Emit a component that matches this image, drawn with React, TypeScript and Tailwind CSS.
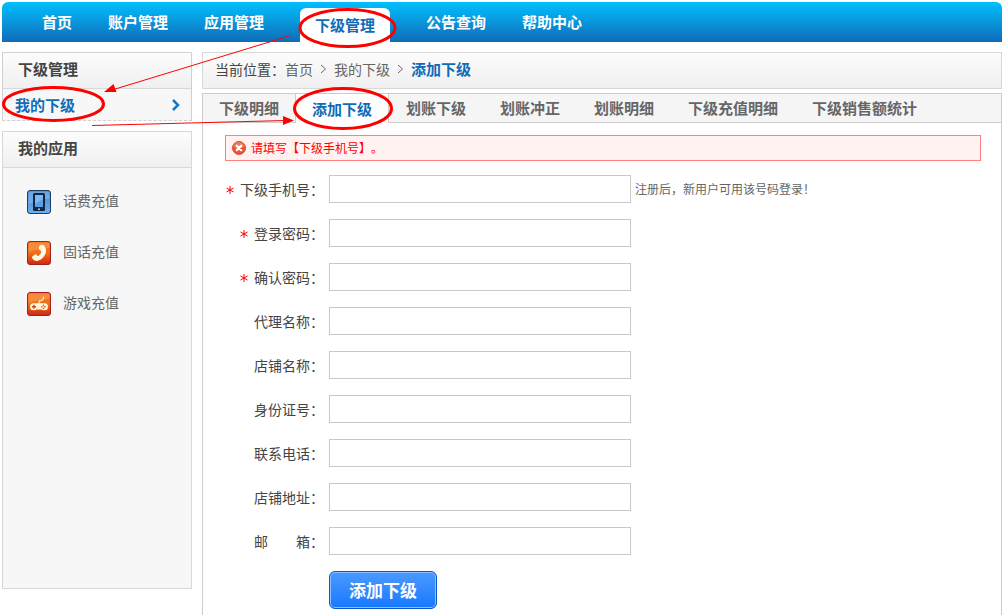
import type { ReactNode } from 'react';

const navItems = ['首页', '账户管理', '应用管理', '下级管理', '公告查询', '帮助中心'];
const tabs = ['下级明细', '添加下级', '划账下级', '划账冲正', '划账明细', '下级充值明细', '下级销售额统计'];

type Field = { id: string; label: string; type?: string; required?: boolean; note?: string };

const fields: Field[] = [
  { id: 'mobile', label: '下级手机号：', type: 'tel', required: true, note: '注册后，新用户可用该号码登录！' },
  { id: 'password', label: '登录密码：', type: 'password', required: true },
  { id: 'confirm', label: '确认密码：', type: 'password', required: true },
  { id: 'agent', label: '代理名称：' },
  { id: 'shop', label: '店铺名称：' },
  { id: 'idcard', label: '身份证号：' },
  { id: 'phone', label: '联系电话：', type: 'tel' },
  { id: 'address', label: '店铺地址：' },
  { id: 'email', label: '邮\u3000\u3000箱：', type: 'email' },
];

function MobileIcon() {
  return (
    <svg width="24" height="24" viewBox="0 0 24 24" aria-hidden="true">
      <defs>
        <linearGradient id="mobile-bg" x1="0" y1="0" x2="0" y2="1">
          <stop offset="0" stopColor="#4583c8" />
          <stop offset="1" stopColor="#6cb0f4" />
        </linearGradient>
      </defs>
      <rect x="0.5" y="0.5" width="23" height="23" rx="2.5" fill="url(#mobile-bg)" stroke="#1d3f66" />
      <path d="M1.5 12V3A1.5 1.5 0 0 1 3 1.5h18A1.5 1.5 0 0 1 22.5 3v6Q12 9 1.5 14z" fill="#a9d0f6" opacity=".4" />
      <rect x="6" y="3" width="12" height="18" rx="1.5" fill="#12263f" />
      <rect x="8" y="5" width="8" height="12" fill="#5c9fe6" />
      <path d="M8 5h8v4l-8 5z" fill="#8fc1f3" opacity=".7" />
      <rect x="11" y="18.5" width="2" height="1.5" fill="#9cc8f5" />
    </svg>
  );
}

function OrangeTile({ id, children }: { id: string; children: ReactNode }) {
  return (
    <svg width="24" height="24" viewBox="0 0 24 24" aria-hidden="true">
      <defs>
        <linearGradient id={id} x1="0" y1="0" x2="0" y2="1">
          <stop offset="0" stopColor="#ee701c" />
          <stop offset="0.5" stopColor="#f0701c" />
          <stop offset="1" stopColor="#cf2410" />
        </linearGradient>
      </defs>
      <rect x="0.5" y="0.5" width="23" height="23" rx="2.5" fill={`url(#${id})`} stroke="#a81f1f" />
      <path d="M1.5 11V3A1.5 1.5 0 0 1 3 1.5h18A1.5 1.5 0 0 1 22.5 3v4Q12 7.500 1.5 11z" fill="#ffb36b" opacity=".4" />
      {children}
    </svg>
  );
}

function PhoneIcon() {
  return (
    <OrangeTile id="phone-bg">
      <path
        d="M13 4.300Q15.200 3 17 4.400Q19.900 7.500 18.700 12Q16.600 18 11 19.800Q8 20.500 5.900 18.200Q4.500 16.300 5.500 15.200L8 13.400Q9.800 13 10.600 15.300Q13.900 13.800 14.600 10Q12.200 9.700 11.900 7.500Q11.900 5.400 13 4.300z"
        fill="#fffbe0"
      />
    </OrangeTile>
  );
}

function GameIcon() {
  return (
    <OrangeTile id="game-bg">
      <path d="M12 12V10Q12 8.500 14 8.500Q16.500 8.300 16.500 5.500V4.500" fill="none" stroke="#ffe0a0" strokeWidth="1.3" />
      <path d="M6.500 11.300h11a3.500 3.500 0 0 1 0 7Q15.500 18.500 14.500 17.500h-5Q8.500 18.500 6.500 18.300a3.500 3.500 0 0 1 0-7z" fill="#fff8d8" />
      <path d="M7 12.800v4M5 14.800h4" stroke="#d8431a" strokeWidth="1.4" />
      <circle cx="16.500" cy="13.300" r=".8" fill="#d8431a" />
      <circle cx="16.500" cy="16.300" r=".8" fill="#d8431a" />
      <circle cx="15" cy="14.800" r=".8" fill="#d8431a" />
      <circle cx="18" cy="14.800" r=".8" fill="#d8431a" />
    </OrangeTile>
  );
}

function ErrorIcon() {
  return (
    <svg width="14" height="14" viewBox="0 0 14 14" aria-hidden="true">
      <circle cx="7" cy="7" r="6.5" fill="#e8512c" stroke="#d2553e" />
      <path d="M1.5 6a5.500 5 0 0 1 11 0Q7 8 1.5 6z" fill="#f08a68" opacity=".7" />
      <path d="M4.800 4.800l4.400 4.400M9.200 4.800l-4.400 4.400" stroke="#fff" strokeWidth="2.4" strokeLinecap="round" />
    </svg>
  );
}

function Separator() {
  return (
    <svg className="mx-[7px]" width="7" height="10" viewBox="0 0 7 10" fill="none" stroke="#666" aria-hidden="true">
      <path d="M1 1l4.500 4L1 9" />
    </svg>
  );
}

function PanelTitle({ children }: { children: ReactNode }) {
  return (
    <h2 className="flex h-9 items-center border-b border-[#d8d8d8] bg-linear-to-b from-[#fcfcfc] to-[#f0f0f0] px-[15px] pb-[3px] text-[15px] font-bold">
      {children}
    </h2>
  );
}

const apps = [
  { name: '话费充值', icon: <MobileIcon /> },
  { name: '固话充值', icon: <PhoneIcon /> },
  { name: '游戏充值', icon: <GameIcon /> },
];

function Annotations() {
  return (
    <svg
      className="pointer-events-none absolute left-0 top-0"
      width="400"
      height="135"
      viewBox="0 0 400 135"
      fill="none"
      stroke="#f00"
      aria-hidden="true"
    >
      <g strokeWidth="3">
        <ellipse cx="347.5" cy="28" rx="47.5" ry="18.5" />
        <ellipse cx="53.5" cy="104" rx="50" ry="16.5" />
        <ellipse cx="343" cy="108.500" rx="48.5" ry="20" />
      </g>
      <path d="M289 36L112 90M92 125.5L286 120.5" />
      <path d="M104 92l9.500-8 3 8z" fill="#f00" stroke="none" />
      <path d="M294 120.5l-11-4.500v9z" fill="#f00" stroke="none" />
    </svg>
  );
}

export default function App() {
  return (
    <div className="relative flex min-h-screen flex-col bg-white px-[2px] pt-[2px] font-['Noto_Sans_CJK_SC',sans-serif] text-sm text-[#444] [text-spacing-trim:space-all]">
      <nav className="flex h-10 rounded-t-md bg-linear-to-b from-[#00c0ff] to-[#0f6cb8] pl-[22px] text-[15px] font-bold">
        {navItems.map((item) =>
          item === '下级管理' ? (
            <a key={item} href="#" aria-current="page" className="mx-[18px] mt-[6px] flex items-center rounded-t-md bg-white px-[15px] text-[#0f6cb8]">
              {item}
            </a>
          ) : (
            <a key={item} href="#" className="flex items-center px-[18px] text-white">
              {item}
            </a>
          ),
        )}
      </nav>

      <div className="mt-[10px] flex flex-1 gap-[10px]">
        <aside className="flex w-[190px] shrink-0 flex-col gap-[10px]">
          <section className="border border-[#d0d0d0] bg-[#f7f7f7] [border-bottom-style:dashed]">
            <PanelTitle>下级管理</PanelTitle>
            <a href="#" className="flex h-[31px] items-center justify-between pl-3 pr-[11px] text-[15px] font-bold text-[#0f6cb8]">
              我的下级
              <svg width="8" height="12" viewBox="0 0 8 12" fill="none" stroke="#1478c4" strokeWidth="2.5" aria-hidden="true">
                <path d="M1 1l5 5-5 5" />
              </svg>
            </a>
          </section>

          <section className="h-[458px] border border-[#d8d8d8] bg-[#f7f7f7]">
            <PanelTitle>我的应用</PanelTitle>
            <ul className="flex flex-col gap-[27px] px-6 pt-[22px]">
              {apps.map((app) => (
                <li key={app.name}>
                  <a href="#" className="flex h-6 gap-3 leading-5 text-[#666]">
                    {app.icon}
                    {app.name}
                  </a>
                </li>
              ))}
            </ul>
          </section>
        </aside>

        <main className="flex min-w-0 flex-1 flex-col gap-1">
          <div className="flex h-[37px] items-center border border-[#d8d8d8] bg-linear-to-b from-[#fcfcfc] to-[#f0f0f0] pb-[3px] pl-3">
            <span>当前位置：</span>
            <a href="#" className="text-[#666]">首页</a>
            <Separator />
            <a href="#" className="text-[#666]">我的下级</a>
            <Separator />
            <a href="#" className="text-[15px] font-bold text-[#0f6cb8]">添加下级</a>
          </div>

          <section className="flex-1 border border-b-0 border-[#ccc]">
            <div className="flex h-[29px] bg-[#f5f5f5] text-[15px] font-bold text-[#666]">
              {tabs.map((tab) =>
                tab === '添加下级' ? (
                  <a key={tab} href="#" aria-current="page" className="flex items-center border-x border-[#ccc] bg-white px-4 text-[#0f6cb8]">
                    {tab}
                  </a>
                ) : (
                  <a key={tab} href="#" className="flex items-center border-b border-[#ccc] px-[17px] first:px-4">
                    {tab}
                  </a>
                ),
              )}
              <span className="flex-1 border-b border-[#ccc]" />
            </div>

            <div role="alert" className="ml-[22px] mr-5 mt-3 flex h-[26px] items-center gap-[5px] border border-[#ff8080] bg-[#fff2f0] pl-[6px] text-xs text-[#f00]">
              <ErrorIcon />
              请填写【下级手机号】。
            </div>

            <form className="mt-[14px] pb-1" onSubmit={(event) => event.preventDefault()}>
              <div className="flex flex-col gap-4">
                {fields.map((field) => (
                  <div key={field.id} className="flex h-7 items-center">
                    <label htmlFor={field.id} className="mr-[5px] flex w-[121px] items-center justify-end gap-[6px] whitespace-nowrap">
                      {field.required && (
                        <svg className="mt-[2px]" width="8" height="8" viewBox="0 0 8 8" stroke="#f00" aria-hidden="true">
                          <path d="M4 0v8M.5 2l7 4M7.5 2l-7 4" />
                        </svg>
                      )}
                      {field.label}
                    </label>
                    <input id={field.id} type={field.type ?? 'text'} className="h-7 w-[302px] border border-[#c8c8c8] bg-white px-2 outline-none" />
                    {field.note && <span className="ml-1 text-xs text-[#666]">{field.note}</span>}
                  </div>
                ))}
              </div>
              <button
                type="submit"
                className="ml-[126px] mt-4 h-[38px] w-[108px] rounded-md border border-[#0a58c8] bg-linear-to-b from-[#4a9aff] to-[#1478ff] text-[17px] font-bold text-white inset-ring inset-ring-[#8cc0ff]"
              >
                添加下级
              </button>
            </form>
          </section>
        </main>
      </div>
      <Annotations />
    </div>
  );
}
